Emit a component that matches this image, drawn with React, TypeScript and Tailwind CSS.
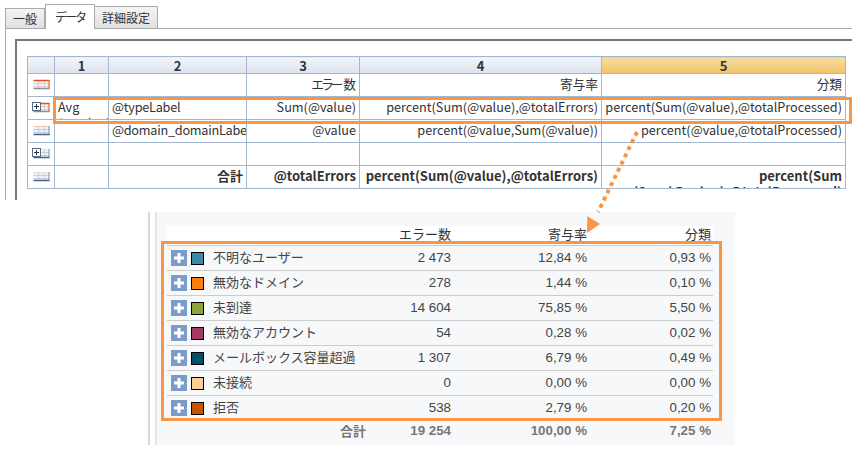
import type { ReactNode } from "react";

const jp = "font-['Noto_Sans_CJK_JP','Open_Sans',sans-serif]";

const topRows: { icon: string; cells: ReactNode[] }[] = [
  { icon: "red", cells: ["", "", <><span className="tracking-[-3px] mr-[3px]">エラー</span>数</>, "寄与率", "分類"] },
  { icon: "redPlus", cells: ["Avg\n(@value)", "@typeLabel", "Sum(@value)", "percent(Sum(@value),@totalErrors)", "percent(Sum(@value),@totalProcessed)"] },
  { icon: "pale", cells: ["", "@domain_domainLabel", "@value", "percent(@value,Sum(@value))", "percent(@value,@totalProcessed)"] },
  { icon: "bluePlus", cells: ["", "", "", "", ""] },
  { icon: "blue", cells: ["", "合計", "@totalErrors", "percent(Sum(@value),@totalErrors)", "percent(Sum\n(Sum(@value),@totalProcessed)"] },
];

const rows = [
  { name: "不明なユーザー", color: "bg-[#3f87a6]", count: "2 473", share: "12,84 %", rate: "0,93 %" },
  { name: "無効なドメイン", color: "bg-[#ff7f0e]", count: "278", share: "1,44 %", rate: "0,10 %" },
  { name: "未到達", color: "bg-[#8ca33a]", count: "14 604", share: "75,85 %", rate: "5,50 %" },
  { name: "無効なアカウント", color: "bg-[#a33a63]", count: "54", share: "0,28 %", rate: "0,02 %" },
  { name: "メールボックス容量超過", color: "bg-[#004f6b]", count: "1 307", share: "6,79 %", rate: "0,49 %" },
  { name: "未接続", color: "bg-[#ffcc99]", count: "0", share: "0,00 %", rate: "0,00 %" },
  { name: "拒否", color: "bg-[#c75300]", count: "538", share: "2,79 %", rate: "0,20 %" },
];

const RowIcon = ({ kind }: { kind: string }) => {
  const red = kind.startsWith("red");
  const top = red ? "#e8502a" : kind === "pale" ? "#f3c4b8" : "#dfe3ea";
  const plus = kind.endsWith("Plus");
  return (
    <svg width="18" height="16" viewBox="0 0 18 16" className="block mx-auto">
      <rect x="1.5" y="3" width="16" height="9" fill="#f1f3f7" />
      <path d="M1.5 6.5h16M1.5 9.5h16M6.5 3v9M12.5 3v9" stroke={red ? "#d9cfcb" : "#c8d0dc"} />
      <path d="M1.5 3.5h16" stroke={top} strokeWidth={red ? 1.5 : 1} />
      <path d="M17 3v9" stroke={red ? "#e8502a" : "#7f95b5"} />
      <path d="M1.5 11.5h16" stroke={red ? "#8f8f8f" : "#47628c"} strokeWidth="1.5" />
      {plus && (
        <>
          <rect x="0.5" y="2.5" width="8" height="8" fill="#fff" stroke="#566a8a" />
          <path d="M2 6.5h5M4.5 4v5" stroke="#333" />
        </>
      )}
    </svg>
  );
};

const PlusBox = () => (
  <svg width="16" height="16" viewBox="0 0 16 16" className="shrink-0">
    <rect width="16" height="16" fill="#7c9cc8" />
    <path d="M8 3v10M3 8h10" stroke="#fff" strokeWidth="3" />
  </svg>
);

const App = () => {
  return (
    <div className={`relative w-[852px] h-[455px] overflow-hidden bg-white text-[#333] ${jp}`}>
      {/* tabs */}
      <div className="flex items-end h-[28px] pl-[5px] text-[12px]">
        <div className="h-[20px] w-[40px] flex items-center justify-center border border-b-0 border-[#aaa] bg-gradient-to-b from-[#f4f4f4] to-[#e0e0e0]">一般</div>
        <div className="h-[25px] w-[50px] mb-[-1px] relative flex items-center justify-center border border-b-0 border-[#aaa] bg-white tracking-[-2px]">データ</div>
        <div className="h-[22px] w-[64px] -ml-px flex items-center justify-center border border-b-0 border-[#aaa] bg-gradient-to-b from-[#f4f4f4] to-[#e0e0e0]">詳細設定</div>
      </div>

      {/* editor panel */}
      <div className="ml-[5px] h-[172px] border-l border-t border-[#aaa] pl-[9px] pt-[10px]">
        <div className="h-[161px] border-l-2 border-t-2 border-[#777] pl-[10px] pt-[15px]">
          <table className="table-fixed border-collapse w-[818px] text-[12.7px]">
            <colgroup>
              <col className="w-[27px]" />
              <col className="w-[54px]" />
              <col className="w-[138px]" />
              <col className="w-[113px]" />
              <col className="w-[242px]" />
              <col className="w-[244px]" />
            </colgroup>
            <thead>
              <tr className="h-[17px] text-[13px] font-bold leading-none">
                <th className="p-0 border border-[#a3b8d0] bg-gradient-to-b from-[#f2f5fa] to-[#dde3ee]"></th>
                {["1", "2", "3", "4"].map((n) => (
                  <th key={n} className="p-0 border border-[#a3b8d0] bg-gradient-to-b from-[#f2f5fa] to-[#dde3ee]">{n}</th>
                ))}
                <th className="p-0 border border-[#a3b8d0] bg-gradient-to-b from-[#f8dca0] to-[#f2c468]">5</th>
              </tr>
            </thead>
            <tbody>
              {topRows.map((row, i) => (
                <tr key={i} className={i === 4 ? "h-[23px] font-bold text-[13px]" : "h-[23px]"}>
                  <td className="p-0 border border-[#a3b8d0]"><RowIcon kind={row.icon} /></td>
                  {row.cells.map((c, j) => (
                    <td key={j} className={`p-0 border border-[#a3b8d0] ${j < 2 && i !== 4 ? "text-left" : "text-right"}`}>
                      <div className={`h-[22px] overflow-hidden px-[3px] pt-[2px] leading-[16px] whitespace-pre ${j === 1 && i !== 4 ? "tracking-[-0.25px]" : ""}`}>{c}</div>
                    </td>
                  ))}
                </tr>
              ))}
            </tbody>
          </table>
        </div>
      </div>

      {/* preview panel */}
      <div className="ml-[148px] mt-[12px] h-[233px] w-[587px] border-l-2 border-[#d8d8d8] pl-[5px]">
        <div className="h-full border-l-2 border-[#dfe6f0] bg-[#f7f8fa] pt-[14px] pl-[10px] font-['Liberation_Sans','Noto_Sans_CJK_JP',sans-serif]">
          <div className="w-[546px]">
            <div className="grid grid-cols-[199px_85px_136px_124px] h-[19px] pb-[3px] items-center text-[13px] leading-[16px] text-right bg-white">
              <span></span>
              <span className={jp}>エラー数</span>
              <span className={jp}>寄与率</span>
              <span className={jp}>分類</span>
            </div>
            <div className="border-t border-[#ccc]">
              {rows.map((r) => (
                <div key={r.name} className="grid grid-cols-[199px_85px_136px_124px] h-[25px] items-center text-[13.33px] text-[#444] text-right border-b border-[#ccc]">
                  <div className="flex items-center pl-[4px] gap-[4px] text-left">
                    <PlusBox />
                    <span className={`w-[13px] h-[13px] border border-black ${r.color}`}></span>
                    <span className={`ml-[5px] -mt-[2px] text-[13px] whitespace-nowrap ${jp}`}>{r.name}</span>
                  </div>
                  <span>{r.count}</span>
                  <span>{r.share}</span>
                  <span>{r.rate}</span>
                </div>
              ))}
              <div className="grid grid-cols-[199px_85px_136px_124px] h-[20px] items-center text-[13.33px] font-bold text-[#777] text-right">
                <span className={`text-[13px] ${jp}`}>合計</span>
                <span>19 254</span>
                <span>100,00 %</span>
                <span>7,25 %</span>
              </div>
            </div>
          </div>
        </div>
      </div>

      {/* orange callouts */}
      <div className="absolute left-[53px] top-[97px] w-[799px] h-[27px] border-[3px] border-[#f79646]"></div>
      <div className="absolute left-[161px] top-[241px] w-[561px] h-[180px] border-[3px] border-[#f79646]"></div>
      <svg width="60" height="115" viewBox="0 0 60 115" className="absolute left-[580px] top-[125px]">
        <path d="M57 7L18 87" stroke="#f79646" strokeWidth="4" strokeDasharray="4 4" fill="none" />
        <polygon points="7,108 7.3,91 20,99" fill="#f79646" />
      </svg>
    </div>
  );
};

export default App;
